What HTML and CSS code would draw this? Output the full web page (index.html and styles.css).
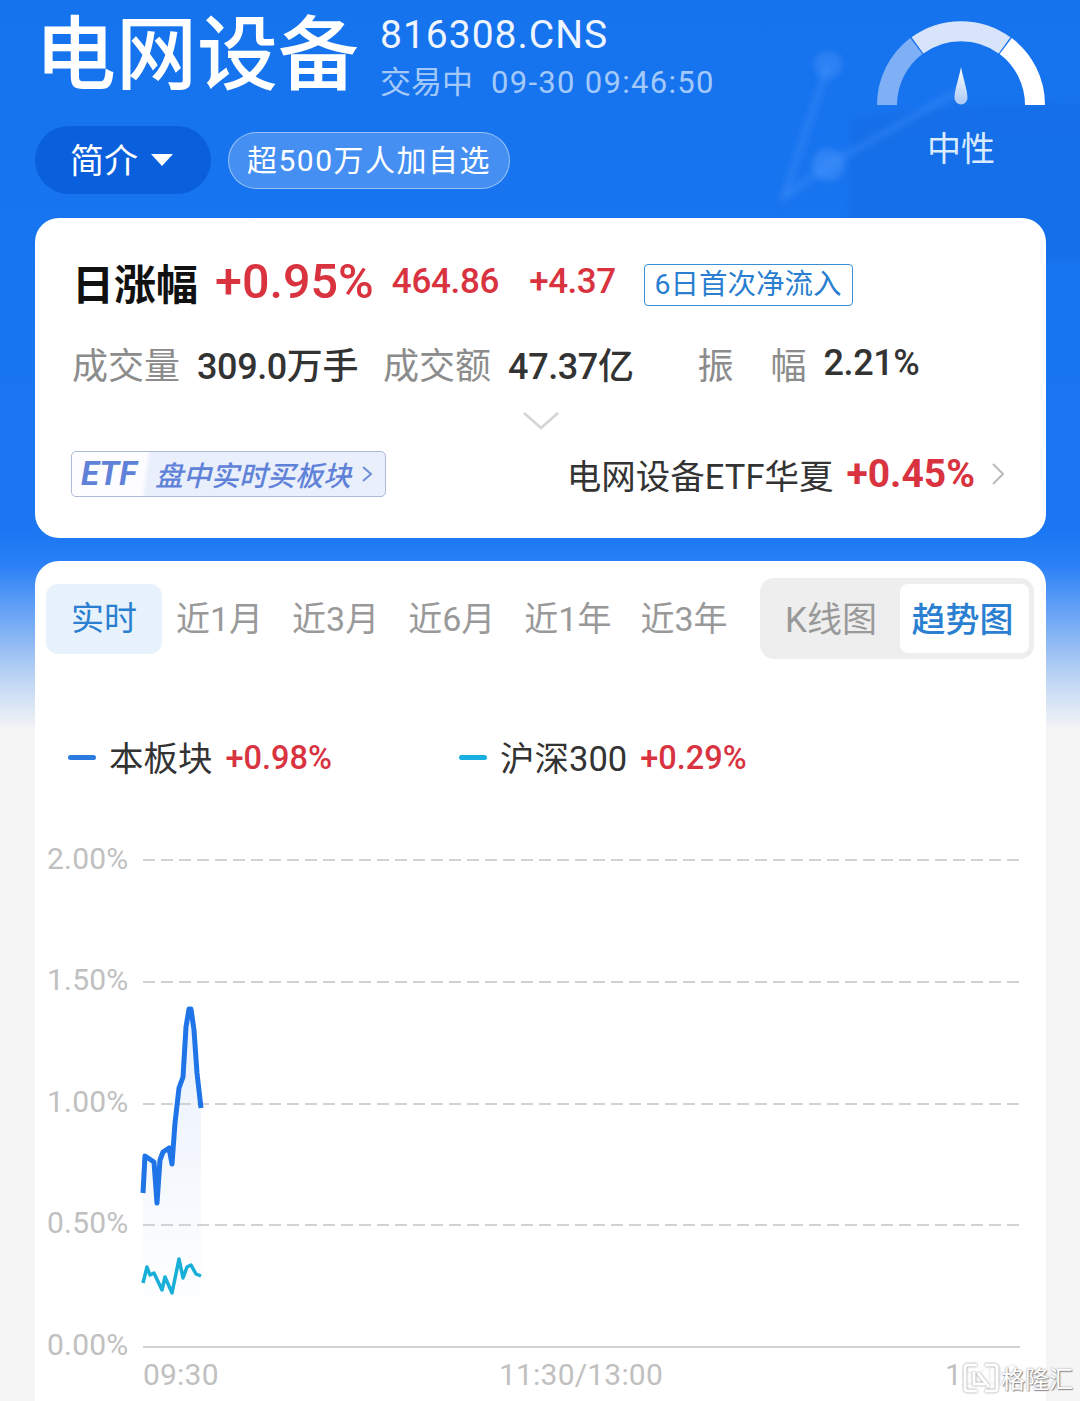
FILE: index.html
```html
<!DOCTYPE html>
<html lang="zh-CN">
<head>
    <meta charset="UTF-8" />
    <meta name="viewport" content="width=device-width, initial-scale=1.0"/>
    <title>电网设备 816308.CNS</title>
    <link rel="stylesheet" href="styles.css">
</head>
<body>
    <svg class="bg-deco" viewBox="0 0 1120 260" width="1120" height="260">
        <path d="M850 120Q960 100 1120 104V260H850Z" fill="#0f62d6" fill-opacity=".3"/>
        <g fill="none" stroke="#4c95fb" stroke-opacity=".3" stroke-width="8">
            <path d="M780 200L828 165L960 90"/>
            <path d="M785 195L828 65"/>
        </g>
        <circle cx="828" cy="65" r="14" fill="#4c95fb" fill-opacity=".4"/>
        <circle cx="828" cy="165" r="16" fill="#4c95fb" fill-opacity=".5"/>
    </svg>

    <header class="top-container">
        <div class="top-left">
            <div class="title-row">
                <h1 class="title">电网设备</h1>
                <div class="title-info">
                    <div class="code">816308.CNS</div>
                    <div class="status"><span>交易中</span><span class="status-time">09-30 09:46:50</span></div>
                </div>
            </div>
            <div class="action-row">
                <div class="intro-btn"><span class="intro-text">简介</span><i class="caret"></i></div>
                <div class="fav-pill">超500万人加自选</div>
            </div>
        </div>
        <div class="gauge">
            <svg viewBox="877 20 168 86" width="168" height="86">
                <defs>
                    <linearGradient id="needle" x1="0" y1="0" x2="0" y2="1">
                        <stop offset="0" stop-color="#ffffff"/>
                        <stop offset="1" stop-color="#a9c9f6"/>
                    </linearGradient>
                </defs>
                <g fill="none" stroke-width="20">
                    <path d="M887 105A74 74 0 0 1 916.3 46" stroke="#7fb0f6"/>
                    <path d="M917.5 45.3A74 74 0 0 1 1004.5 45.3" stroke="#d7e4f9"/>
                    <path d="M1005.7 46A74 74 0 0 1 1035 105" stroke="#ffffff"/>
                </g>
                <path d="M961 67C963 78 967.500 90 967.500 98A6.500 6.500 0 0 1 954.500 98C954.500 90 959 78 961 67Z" fill="url(#needle)"/>
            </svg>
            <div class="gauge-label">中性</div>
        </div>
    </header>

    <section class="card quote-card">
        <div class="quote-main">
            <span class="quote-name">日涨幅</span>
            <span class="quote-pct">+0.95%</span>
            <span class="quote-num">464.86</span>
            <span class="quote-num quote-chg">+4.37</span>
            <span class="quote-tag">6日首次净流入</span>
        </div>
        <div class="quote-stats">
            <span class="stat-label">成交量</span><span class="stat-val stat-vol">309.0万手</span>
            <span class="stat-label">成交额</span><span class="stat-val stat-amt">47.37亿</span>
            <span class="stat-label stat-spread"><span>振</span><span>幅</span></span><span class="stat-val">2.21%</span>
        </div>
        <div class="expand">
            <svg viewBox="0 0 36 18" width="36" height="18"><path d="M1 1L18 16L35 1" fill="none" stroke="#d4d4d4" stroke-width="2.500"/></svg>
        </div>
        <div class="etf-row">
            <div class="etf-box">
                <span class="etf-logo">ETF</span>
                <span class="etf-text">盘中实时买板块
                    <svg viewBox="0 0 10 18" width="10" height="18"><path d="M1 2L9 9L1 16" fill="none" stroke="#6f8ed8" stroke-width="2"/></svg>
                </span>
            </div>
            <div class="etf-info">
                <span class="etf-name">电网设备ETF华夏</span>
                <span class="etf-pct">+0.45%</span>
                <svg viewBox="0 0 12 24" width="12" height="24"><path d="M1 2L11 12L1 22" fill="none" stroke="#bbbbbb" stroke-width="2"/></svg>
            </div>
        </div>
    </section>

    <section class="card chart-card">
        <div class="tab-row">
            <div class="tabs">
                <span class="tab tab-active">实时</span>
                <span class="tab">近1月</span>
                <span class="tab">近3月</span>
                <span class="tab">近6月</span>
                <span class="tab">近1年</span>
                <span class="tab">近3年</span>
            </div>
            <div class="toggle">
                <span class="toggle-item">K线图</span>
                <span class="toggle-item toggle-active">趋势图</span>
            </div>
        </div>
        <div class="legend">
            <div class="legend-item legend-first"><i class="dash dash-blue"></i><span class="legend-name">本板块</span><span class="legend-pct">+0.98%</span></div>
            <div class="legend-item"><i class="dash dash-teal"></i><span class="legend-name">沪深300</span><span class="legend-pct">+0.29%</span></div>
        </div>
        <svg class="chart" viewBox="35 830 1011 571" width="1011" height="571">
            <defs>
                <linearGradient id="area" x1="0" y1="0" x2="0" y2="1">
                    <stop offset="0" stop-color="#e9f1fc"/>
                    <stop offset="1" stop-color="#ffffff"/>
                </linearGradient>
            </defs>
            <g class="grid-dash">
                <line x1="143" y1="860" x2="1020" y2="860"/>
                <line x1="143" y1="982" x2="1020" y2="982"/>
                <line x1="143" y1="1104" x2="1020" y2="1104"/>
                <line x1="143" y1="1225" x2="1020" y2="1225"/>
            </g>
            <line class="grid-base" x1="143" y1="1347" x2="1020" y2="1347"/>
            <g class="axis">
                <text x="47" y="869">2.00%</text>
                <text x="47" y="990">1.50%</text>
                <text x="47" y="1112">1.00%</text>
                <text x="47" y="1233">0.50%</text>
                <text x="47" y="1355">0.00%</text>
                <text x="143" y="1385">09:30</text>
                <text x="499" y="1385">11:30/13:00</text>
                <text x="945" y="1385">15:00</text>
            </g>
            <path d="M143 1193L145 1156L154 1162L157 1203L160 1160L163 1152L169 1148L172 1164L175 1123L179 1088L183 1077L186 1027L189 1009L191 1009L194 1030L197 1073L201 1108V1320H143Z" fill="url(#area)"/>
            <g class="grid-dash">
                <line x1="143" y1="1104" x2="201" y2="1104"/>
                <line x1="143" y1="1225" x2="201" y2="1225"/>
            </g>
            <path class="line-blue" d="M143 1193L145 1156L154 1162L157 1203L160 1160L163 1152L169 1148L172 1164L175 1123L179 1088L183 1077L186 1027L189 1009L191 1009L194 1030L197 1073L201 1108"/>
            <path class="line-teal" d="M143 1283L147 1267L150 1275L154 1273L162 1290L165 1277L172 1293L179 1259L183 1278L187 1267L191 1265L196 1274L201 1276"/>
        </svg>
    </section>

    <div class="watermark">
        <svg viewBox="0 0 36 30" width="36" height="30"><path d="M14 2H5Q2 2 2 5V25Q2 28 5 28H14M22 2H31Q34 2 34 5V25Q34 28 31 28H22M11 9V21H22M15 10L26 24" fill="none" stroke="#ffffff" stroke-width="3"/></svg>
        <span>格隆汇</span>
    </div>
</body>
</html>
```

FILE: styles.css
```css
:root {
    --red: #d8333f;
    --blue: #2a7fd0;
    --muted: #8c8c8c;
    --axis: #c0c0c0;
}
html, body {
    height: 100%;
}
body {
    position: relative;
    width: 1080px;
    height: 1401px;
    margin: 0;
    overflow: hidden;
    font-family: Roboto, "Noto Sans CJK SC", sans-serif;
    background: linear-gradient(#1673ee 0, #1a76f2 530px, #2a80f6 565px, #b9d2f4 675px, #f5f5f5 730px);
}
.bg-deco {
    position: absolute;
    top: 0;
    left: 0;
    filter: blur(3px);
}
.top-container {
    position: relative;
    display: flex;
    justify-content: space-between;
    height: 218px;
    padding: 0 35px;
    box-sizing: border-box;
}
.title-row {
    display: flex;
    height: 126px;
}
.title {
    margin: 8px 0 0 0;
    font-size: 81px;
    line-height: 96px;
    font-weight: 500;
    color: #fff;
}
.title-info {
    margin: 12px 0 0 21px;
}
.code {
    font-size: 39px;
    line-height: 46px;
    letter-spacing: 1px;
    color: #eef5ff;
}
.status {
    display: flex;
    gap: 18px;
    margin-top: 2px;
    font-size: 31px;
    line-height: 46px;
    color: #a3c9fa;
}
.status-time {
    letter-spacing: 1.3px;
}
.action-row {
    display: flex;
    align-items: center;
    gap: 17px;
}
.intro-btn {
    display: flex;
    align-items: center;
    gap: 13px;
    height: 68px;
    padding: 0 38px 0 35px;
    border-radius: 34px;
    background-color: #0a5fdc;
    color: #fff;
    font-size: 34px;
}
.intro-text {
    margin-bottom: 4px;
}
.caret {
    width: 0;
    height: 0;
    border-left: 11px solid transparent;
    border-right: 11px solid transparent;
    border-top: 12px solid #fff;
}
.fav-pill {
    height: 57px;
    padding: 0 18px;
    line-height: 55px;
    letter-spacing: 1.5px;
    box-sizing: border-box;
    border: 1px solid rgba(255,255,255,.45);
    border-radius: 29px;
    background-color: rgba(255,255,255,.2);
    color: #fff;
    font-size: 30px;
}
.gauge {
    display: flex;
    flex-direction: column;
    align-items: center;
    margin: 20px 0 0 0;
}
.gauge svg {
    display: block;
}
.gauge-label {
    margin-top: 20px;
    font-size: 34px;
    line-height: 46px;
    color: #d9ebff;
}
.card {
    position: relative;
    width: 1011px;
    margin-left: 35px;
    background-color: #fff;
    border-radius: 24px;
}
.quote-card {
    height: 320px;
    padding: 0 37px;
    box-sizing: border-box;
}
.quote-main {
    display: flex;
    align-items: center;
    height: 126px;
}
.quote-name {
    font-size: 42px;
    font-weight: 700;
    color: #111;
}
.quote-pct {
    margin-left: 17px;
    font-size: 48.500px;
    font-weight: 500;
    color: var(--red);
}
.quote-num {
    margin-left: 18px;
    font-size: 35px;
    font-weight: 500;
    letter-spacing: -.3px;
    color: var(--red);
}
.quote-chg {
    margin-left: 30px;
    letter-spacing: -.5px;
}
.quote-tag {
    margin: 8px 0 0 28px;
    height: 42px;
    padding: 0 10px;
    line-height: 40px;
    box-sizing: border-box;
    border: 1px solid #3a8ed8;
    border-radius: 4px;
    color: var(--blue);
    font-size: 28.500px;
}
.quote-stats {
    display: flex;
    align-items: center;
    height: 42px;
    margin-top: -2px;
    font-size: 36px;
}
.stat-label {
    color: var(--muted);
}
.stat-val {
    margin-left: 17px;
    letter-spacing: -.4px;
    color: #333;
    font-weight: 500;
}
.stat-vol {
    margin-right: 25px;
}
.stat-amt {
    margin-right: 64px;
}
.stat-spread {
    display: flex;
    justify-content: space-between;
    width: 109px;
}
.expand {
    display: flex;
    justify-content: center;
    margin-top: 28px;
}
.etf-row {
    display: flex;
    justify-content: space-between;
    align-items: center;
    margin: 19px 0 0 -1px;
}
.etf-box {
    display: flex;
    width: 315px;
    height: 46px;
    box-sizing: border-box;
    border: 1px solid #aeb8d8;
    border-radius: 5px;
    overflow: hidden;
    background: linear-gradient(98deg, #fdfdff 74px, #e9effb 79px);
    color: #5f82d8;
}
.etf-logo {
    width: 78px;
    padding-left: 9px;
    box-sizing: border-box;
    font-size: 33px;
    font-weight: 700;
    font-style: italic;
    line-height: 44px;
}
.etf-text {
    display: flex;
    align-items: center;
    gap: 11px;
    padding-left: 5px;
    font-size: 28px;
    font-weight: 500;
    font-style: italic;
    white-space: nowrap;
}
.etf-info {
    display: flex;
    align-items: center;
    margin-right: 5px;
}
.etf-name {
    font-size: 34.500px;
    color: #333;
}
.etf-pct {
    margin: 0 17px 0 13px;
    font-size: 39px;
    font-weight: 700;
    color: var(--red);
}
.chart-card {
    margin-top: 23px;
    height: 870px;
}
.tab-row {
    display: flex;
    justify-content: space-between;
    height: 106px;
    padding: 23px 12px 0 11px;
    box-sizing: border-box;
}
.tabs {
    display: flex;
    height: 70px;
    gap: 29px;
}
.tab {
    font-size: 34px;
    line-height: 70px;
    color: #999;
}
.tab-active {
    width: 116px;
    margin-right: -15px;
    text-align: center;
    border-radius: 12px;
    background-color: #e8f2fc;
    color: var(--blue);
    font-size: 33px;
}
.toggle {
    display: flex;
    align-items: center;
    justify-content: space-between;
    width: 274px;
    height: 81px;
    margin-top: -6px;
    padding: 0 5px 0 25px;
    box-sizing: border-box;
    border-radius: 14px;
    background-color: #eeeeee;
}
.toggle-item {
    margin-bottom: 5px;
    font-size: 35px;
    color: #999;
}
.toggle-active {
    width: 129px;
    height: 69px;
    margin-bottom: 0;
    padding-right: 4px;
    box-sizing: border-box;
    line-height: 72px;
    text-align: center;
    border-radius: 8px;
    background-color: #fff;
    color: var(--blue);
    font-size: 34px;
    font-weight: 500;
}
.legend {
    display: flex;
    align-items: center;
    height: 163px;
    padding: 18px 0 0 33px;
    box-sizing: border-box;
}
.legend-item {
    display: flex;
    align-items: center;
}
.legend-first {
    width: 391px;
}
.dash {
    width: 28px;
    height: 5px;
    border-radius: 3px;
}
.dash-blue {
    background-color: #2a7ae0;
}
.dash-teal {
    background-color: #18b0e0;
}
.legend-name {
    margin: 0 13px 3px;
    font-size: 34.500px;
    color: #333;
}
.legend-pct {
    font-size: 32.500px;
    font-weight: 500;
    color: var(--red);
}
.chart {
    display: block;
}
.grid-dash line {
    stroke: #d2d2d2;
    stroke-width: 2;
    stroke-dasharray: 12 6;
}
.grid-base {
    stroke: #d2d2d2;
    stroke-width: 2;
}
.axis text {
    font-size: 30px;
    letter-spacing: .2px;
    fill: var(--axis);
}
.line-blue {
    fill: none;
    stroke: #1f75e8;
    stroke-width: 5;
    stroke-linejoin: round;
}
.line-teal {
    fill: none;
    stroke: #17aed8;
    stroke-width: 3.500;
    stroke-linejoin: round;
}
.watermark {
    position: absolute;
    right: 7px;
    bottom: 6px;
    display: flex;
    align-items: center;
    gap: 2px;
    background: linear-gradient(90deg, rgba(255,255,255,.85) 60px, transparent 85px);
    color: #fff;
    font-size: 24px;
    text-shadow: 0 0 2px #8a8a8a, 1px 1px 1px #8a8a8a;
}
.watermark svg {
    filter: drop-shadow(0 0 1px #8a8a8a);
}
```
